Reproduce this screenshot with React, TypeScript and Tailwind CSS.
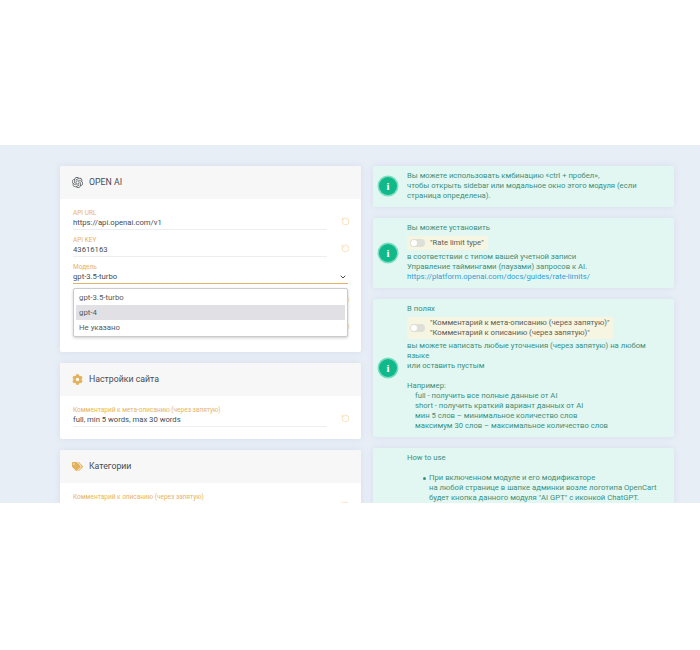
import React from 'react';
import { ChevronDown, RotateCcw } from 'lucide-react';
import { FaCog, FaTags } from 'react-icons/fa';
import { SiOpenai } from 'react-icons/si';

function Field({ label, value }: { label: string; value: string }) {
  return (
    <div className="flex items-center h-[27px]">
      <div className="shrink-0 w-[254px] h-[21px] border-b border-[#eceef0]">
        <div className="text-[6.5px] leading-[9px] whitespace-nowrap text-[#e8b45c]">{label}</div>
        <div className="text-[7.7px] leading-[10px] whitespace-nowrap text-[#444b52]">{value}</div>
      </div>
      <RotateCcw className="shrink-0 ml-[14px] mt-[4px] w-[9px] h-[9px] text-[#f8dfb8]" strokeWidth={2.5} />
    </div>
  );
}

function Card({ icon, title, children }: { icon: React.ReactNode; title: string; children: React.ReactNode }) {
  return (
    <div className="relative bg-white rounded-[2px] shadow-[0_0_6px_rgba(160,175,200,0.25)]">
      <div className="flex items-center gap-[6px] h-[33px] px-[12px] bg-[#f7f7f7] rounded-t-[2px]">
        {icon}
        <span className="text-[8.75px] text-[#454c54]">{title}</span>
      </div>
      <div className="px-[13px] pt-[7px]">{children}</div>
    </div>
  );
}

function Alert({ children }: { children: React.ReactNode }) {
  return (
    <div className="flex items-center pl-[6px] pr-[14px] pt-[5px] pb-[6px] bg-[#e2f7f2] rounded-[2px] shadow-[0_0_6px_rgba(160,175,200,0.25)] text-[7.7px] leading-[10px] text-[#3b8f7c]">
      <div className="shrink-0 flex items-center justify-center w-[18px] h-[18px] rounded-full bg-[#10b98a] ring-[1.5px] ring-[#7fdcc2] text-white font-bold text-[11px] font-['Liberation_Serif',serif]">
        i
      </div>
      <div className="ml-[10px]">{children}</div>
    </div>
  );
}

function Highlight({ lines }: { lines: string[] }) {
  return (
    <div className="flex items-center w-fit mt-[3px] mb-[2px] pl-[3px] pr-[4px] py-[1px] min-h-[14px] bg-[#f5f5e1] text-[#5b6058]">
      <div className="relative shrink-0 w-[15px] h-[8px] rounded-full bg-[#dedfd6] mr-[5px]">
        <div className="absolute left-[1px] top-[1px] w-[6px] h-[6px] rounded-full bg-white" />
      </div>
      <div>
        {lines.map(l => (
          <div key={l}>{l}</div>
        ))}
      </div>
    </div>
  );
}

export default function App() {
  return (
    <div className="min-h-[650px] bg-white font-['Roboto',sans-serif] pt-[145px]">
      <div className="h-[358px] overflow-hidden bg-[#e8eef6] pt-[21px] pl-[60px] pr-[26px]">
        <div className="grid grid-cols-[301px_301px] gap-x-[12px]">
          {/* left column */}
          <div className="flex flex-col gap-[11px]">
            <div className="relative">
              <Card icon={<SiOpenai className="w-[11px] h-[11px] text-[#555b60]" />} title="OPEN AI">
                <div className="h-[146px]">
                  <Field label="API URL" value="https://api.openai.com/v1" />
                  <Field label="API KEY" value="43616163" />
                  <div className="flex items-end justify-between h-[24px] border-b border-[#e3b365]">
                    <div className="mb-[1px]">
                      <div className="text-[6.5px] leading-[9px] text-[#e8b45c]">Модель</div>
                      <div className="text-[7.7px] leading-[10px] text-[#444b52]">gpt-3.5-turbo</div>
                    </div>
                    <ChevronDown className="w-[8px] h-[8px] mb-[2px] mr-[1px] text-[#444b52]" strokeWidth={3} />
                  </div>
                  <Field label="" value="" />
                  <Field label="" value="" />
                </div>
              </Card>
              {/* open select menu */}
              <div className="absolute left-[13px] top-[122px] w-[275px] h-[49px] px-[2px] py-[1px] bg-white border border-[#c9cbce] rounded-[2px] shadow-[0_1px_3px_rgba(0,0,0,0.2)] text-[7.8px] text-[#555b62]">
                <div className="flex items-center h-[15px] px-[3px]">gpt-3.5-turbo</div>
                <div className="flex items-center h-[15px] px-[3px] bg-[#e0e0e5]">gpt-4</div>
                <div className="flex items-center h-[15px] px-[3px]">Не указано</div>
              </div>
            </div>
            <Card icon={<FaCog className="w-[11px] h-[11px] text-[#e3b05c]" />} title="Настройки сайта">
              <div className="h-[36px]">
                <Field label="Комментарий к мета-описанию (через запятую)" value="full, min 5 words, max 30 words" />
              </div>
            </Card>
            <Card icon={<FaTags className="w-[11px] h-[11px] text-[#e3b05c]" />} title="Категории">
              <Field label="Комментарий к описанию (через запятую)" value="full, min 5 words, max 30 words" />
            </Card>
          </div>

          {/* right column */}
          <div className="flex flex-col gap-[11px]">
            <Alert>
              Вы можете использовать кмбинацию «ctrl + пробел»,
              <br />
              чтобы открыть sidebar или модальное окно этого модуля (если страница определена).
            </Alert>
            <Alert>
              Вы можете установить
              <Highlight lines={['"Rate limit type"']} />
              в соответствии с типом вашей учетной записи
              <br />
              Управление таймингами (паузами) запросов к AI.
              <br />
              <span className="text-[#2f9ed8]">https://platform.openai.com/docs/guides/rate-limits/</span>
            </Alert>
            <Alert>
              В полях
              <Highlight lines={['"Комментарий к мета-описанию (через запятую)"', '"Комментарий к описанию (через запятую)"']} />
              вы можете написать любые уточнения (через запятую) на любом языке
              <br />
              или оставить пустым
              <br />
              <br />
              Например:
              <div className="pl-[8px]">
                full - получить все полные данные от AI
                <br />
                short - получить краткий вариант данных от AI
                <br />
                мин 5 слов – минимальное количество слов
                <br />
                максимум 30 слов – максимальное количество слов
              </div>
            </Alert>
            <div className="pl-[34px] pr-[14px] pt-[5px] pb-[6px] bg-[#e2f7f2] rounded-[2px] shadow-[0_0_6px_rgba(160,175,200,0.25)] text-[7.7px] leading-[10px] text-[#3b8f7c]">
              How to use
              <ul className="mt-[10px] pl-[16px]">
                <li className="flex items-start">
                  <span className="shrink-0 mt-[4px] mr-[3px] w-[3px] h-[3px] rounded-full bg-[#3b8f7c]" />
                  <span>
                    При включенном модуле и его модификаторе
                    <br />
                    на любой странице в шапке админки возле логотипа OpenCart
                    <br />
                    будет кнопка данного модуля "AI GPT" с иконкой ChatGPT.
                  </span>
                </li>
              </ul>
            </div>
          </div>
        </div>
      </div>
    </div>
  );
}
